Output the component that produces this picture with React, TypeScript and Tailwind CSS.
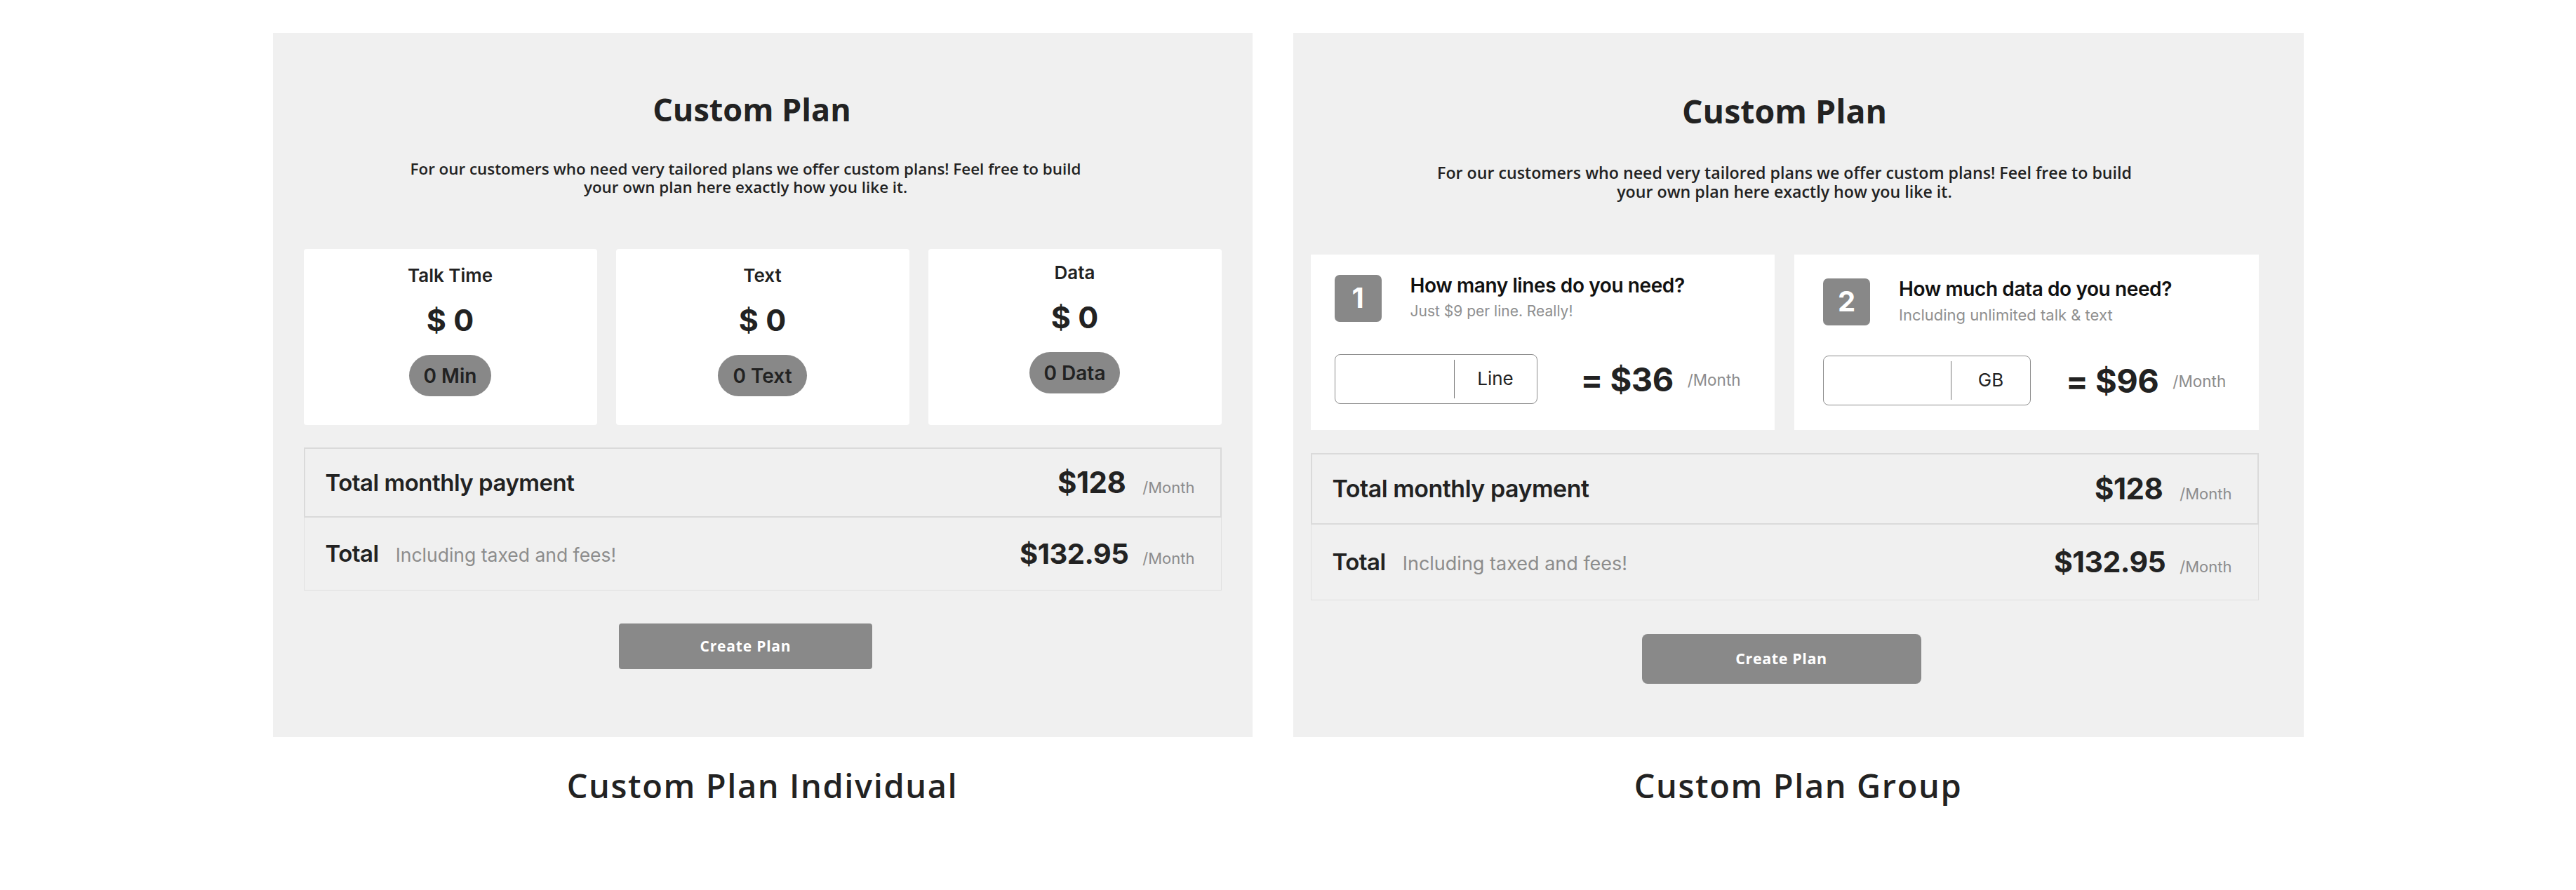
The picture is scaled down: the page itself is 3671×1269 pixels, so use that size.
import React from "react";

const mont = { fontFamily: '"Open Sans", "DejaVu Sans", sans-serif' };
const inter = { fontFamily: 'Inter, "Noto Sans", sans-serif' };

type Allowance = { title: string; pill: string; top: string };

const allowances: Allowance[] = [
  { title: "Talk Time", pill: "0 Min", top: "pt-[25px]" },
  { title: "Text", pill: "0 Text", top: "pt-[25px]" },
  { title: "Data", pill: "0 Data", top: "pt-[21px]" },
];

const AllowanceCard: React.FC<{ item: Allowance }> = ({ item }) => (
  <div
    className={`flex h-[251px] flex-col items-center rounded-[4px] bg-white ${item.top}`}
    style={inter}
  >
    <div className="text-[26px] font-semibold leading-none text-[#222]">{item.title}</div>
    <div className="mt-[29px] text-[43px] font-bold leading-none text-[#222]">$ 0</div>
    <div className="mt-[28px] flex h-[59px] items-center rounded-full bg-[#888888] px-[21px] text-[28px] font-semibold leading-none text-[#222]">
      {item.pill}
    </div>
  </div>
);

const Totals: React.FC<{ big?: boolean }> = ({ big }) => (
  <div className="w-full" style={inter}>
    <div
      className={`flex items-center justify-between border-2 border-[#dadada] pl-[29px] pr-[36px] ${
        big ? "h-[102px]" : "h-[100px]"
      }`}
    >
      <span className={`${big ? "text-[34px]" : "text-[33px]"} font-semibold leading-none tracking-[-0.5px] text-[#222]`}>
        Total monthly payment
      </span>
      <span className="flex items-baseline gap-[24px]">
        <span className="text-[42px] font-bold leading-none tracking-[-0.5px] text-[#222]">$128</span>
        <span className="text-[22px] leading-none text-[#8c8c8c]">/Month</span>
      </span>
    </div>
    <div
      className={`flex items-center justify-between border border-t-0 border-[#e0e0e0] pl-[30px] pr-[37px] ${
        big ? "h-[108px]" : "h-[104px]"
      }`}
    >
      <span className="flex items-baseline gap-[24px]">
        <span className="text-[33px] font-semibold leading-none tracking-[-0.5px] text-[#222]">Total</span>
        <span className={`${big ? "text-[27px]" : "text-[26.5px]"} leading-none text-[#8c8c8c]`}>
          Including taxed and fees!
        </span>
      </span>
      <span className="flex items-baseline gap-[20px]">
        <span className={`${big ? "text-[41px]" : "text-[40px]"} font-bold leading-none tracking-[-0.5px] text-[#222]`}>
          $132.95
        </span>
        <span className="text-[22px] leading-none text-[#8c8c8c]">/Month</span>
      </span>
    </div>
  </div>
);

type Step = {
  n: string;
  title: string;
  sub: string;
  subSize: string;
  unit: string;
  price: string;
  pad: string;
  rowTop: string;
  inputW: string;
  fieldW: string;
  eqGap: string;
};

const steps: Step[] = [
  {
    n: "1",
    title: "How many lines do you need?",
    sub: "Just $9 per line. Really!",
    subSize: "text-[21px]",
    unit: "Line",
    price: "$36",
    pad: "pl-[34px] pt-[29px]",
    rowTop: "mt-[46px]",
    inputW: "w-[289px]",
    fieldW: "w-[170px]",
    eqGap: "ml-[62px]",
  },
  {
    n: "2",
    title: "How much data do you need?",
    sub: "Including unlimited talk & text",
    subSize: "text-[22px]",
    unit: "GB",
    price: "$96",
    pad: "pl-[41px] pt-[34px]",
    rowTop: "mt-[43px]",
    inputW: "w-[296px]",
    fieldW: "w-[182px]",
    eqGap: "ml-[50px]",
  },
];

const StepCard: React.FC<{ step: Step }> = ({ step }) => (
  <div className={`h-[250px] bg-white ${step.pad}`} style={inter}>
    <div className="flex">
      <div className="flex h-[67px] w-[67px] items-center justify-center rounded-[7px] bg-[#888888] text-[40px] font-bold leading-none text-white">
        {step.n}
      </div>
      <div className="ml-[41px] pt-[1px]">
        <div className="text-[28px] font-semibold leading-none tracking-[-0.4px] text-[#111]">{step.title}</div>
        <div className={`mt-[12px] ${step.subSize} leading-none text-[#8f8f8f]`}>{step.sub}</div>
      </div>
    </div>
    <div className={`${step.rowTop} flex items-center`}>
      <div className={`flex h-[71px] items-stretch rounded-[8px] border-[1.5px] border-[#8c8c8c] py-[7px] ${step.inputW}`}>
        <div className={`${step.fieldW} border-r border-[#777]`} />
        <div className="flex flex-1 items-center justify-center text-[26px] leading-none text-[#222]">{step.unit}</div>
      </div>
      <div className={`flex items-center ${step.eqGap}`}>
        <span className="text-[47px] font-bold leading-none tracking-[-0.5px] text-[#222]">= {step.price}</span>
        <span className="ml-[20px] mt-[5px] text-[22.5px] leading-none text-[#8c8c8c]">/Month</span>
      </div>
    </div>
  </div>
);

const Intro: React.FC<{
  titleCls: string;
  descCls: string;
}> = ({ titleCls, descCls }) => (
  <>
    <h1 className={`${titleCls} font-bold leading-none text-[#222]`} style={mont}>
      Custom Plan
    </h1>
    <p className={`${descCls} text-center font-semibold text-[#222]`} style={mont}>
      For our customers who need very tailored plans we offer custom plans! Feel free to build
      <br />
      your own plan here exactly how you like it.
    </p>
  </>
);

const Caption: React.FC<{ children: React.ReactNode }> = ({ children }) => (
  <div
    className="mt-[46px] text-center text-[47px] font-semibold leading-none tracking-[1.6px] text-[#222]"
    style={mont}
  >
    {children}
  </div>
);

export default function App() {
  return (
    <div className="flex h-[1269px] w-[3671px] justify-center gap-[58px] bg-white pt-[47px]">
      <div className="flex flex-col">
        <div className="flex h-[1004px] w-[1396px] flex-col items-center bg-[#f0f0f0] px-[44px]">
          <Intro
            titleCls="text-[45px] mt-[86px] mr-[30px]"
            descCls="text-[22.4px] leading-[26px] mt-[50px] mr-[48px]"
          />
          <div className="mt-[75px] grid w-full grid-cols-3 gap-[27px]">
            {allowances.map((a) => (
              <AllowanceCard key={a.title} item={a} />
            ))}
          </div>
          <div className="mt-[32px] w-full">
            <Totals />
          </div>
          <button
            className="mr-[48px] mt-[47px] h-[65px] w-[361px] rounded-[4px] bg-[#898989] text-[21px] font-bold tracking-[0.8px] text-white"
            style={mont}
          >
            Create Plan
          </button>
        </div>
        <Caption>Custom Plan Individual</Caption>
      </div>

      <div className="flex flex-col">
        <div className="flex h-[1004px] w-[1440px] flex-col items-center bg-[#f0f0f0] pl-[25px] pr-[64px]">
          <Intro
            titleCls="text-[46.5px] mt-[88px]"
            descCls="text-[23.2px] leading-[27px] mt-[51px]"
          />
          <div className="mt-[76px] grid w-full grid-cols-2 gap-[28px]">
            {steps.map((s) => (
              <StepCard key={s.n} step={s} />
            ))}
          </div>
          <div className="mt-[33px] w-full">
            <Totals big />
          </div>
          <button
            className="mr-[9px] mt-[48px] h-[71px] w-[398px] rounded-[8px] bg-[#898989] text-[21.5px] font-bold tracking-[0.6px] text-white"
            style={mont}
          >
            Create Plan
          </button>
        </div>
        <Caption>Custom Plan Group</Caption>
      </div>
    </div>
  );
}
